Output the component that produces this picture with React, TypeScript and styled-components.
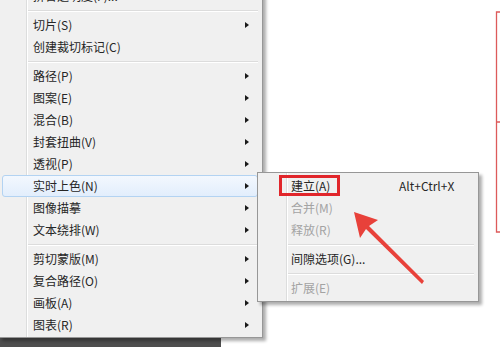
import React from 'react'
import styled, { createGlobalStyle } from 'styled-components'

const GlobalStyle = createGlobalStyle`
  html, body {
    margin: 0;
    padding: 0;
    background: #fff;
  }
  body {
    font-family: 'Noto Sans CJK SC', 'Microsoft YaHei', sans-serif;
  }
`

const Canvas = styled.div`
  position: relative;
  width: 500px;
  height: 347px;
  overflow: hidden;
  background: linear-gradient(#4e4e4e, #4e4e4e) 0 338px / 221px 9px no-repeat,
    #fff;
`

const Menu = styled.div<{ $gutter: number }>`
  box-sizing: border-box;
  border: 1px solid #979797;
  padding: 2px 4px 1px 2px;
  background: linear-gradient(
      to right,
      transparent ${(p) => p.$gutter}px,
      #dcdddd ${(p) => p.$gutter}px,
      #dcdddd ${(p) => p.$gutter + 1}px,
      #fff ${(p) => p.$gutter + 1}px,
      #fff ${(p) => p.$gutter + 2}px,
      transparent ${(p) => p.$gutter + 2}px
    ),
    #f0f0f0;
  box-shadow: 3px 3px 3px rgba(0, 0, 0, 0.32);
  font-size: 12px;
`

const MainMenu = styled(Menu)`
  width: 264px;
  margin: -18px 0 0 -1px;
`

const SubMenu = styled(Menu)`
  position: absolute;
  left: 257px;
  top: 172px;
  width: 222px;
  padding-bottom: 2px;
`

const Item = styled.div<{ $active?: boolean; $disabled?: boolean }>`
  box-sizing: border-box;
  height: 22px;
  display: flex;
  align-items: center;
  justify-content: space-between;
  padding: 0 8px 0 30px;
  color: ${(p) => (p.$disabled ? '#a3a3a3' : '#262626')};
  border: 1px solid ${(p) => (p.$active ? '#b3d3f2' : 'transparent')};
  border-radius: 3px;
  background: ${(p) =>
    p.$active ? 'linear-gradient(#f3f8fe, #e2eefc)' : 'transparent'};
  white-space: nowrap;
  line-height: 20px;
`

const SubItem = styled(Item)`
  display: grid;
  grid-template-columns: 108px 1fr;
`

const Shortcut = styled.span`
  color: #262626;
`

const Arrow = styled.span`
  width: 0;
  height: 0;
  border-left: 4px solid #1a1a1a;
  border-top: 3.5px solid transparent;
  border-bottom: 3.5px solid transparent;
`

const Separator = styled.div<{ $indent: number }>`
  height: 7px;
  display: flex;
  align-items: center;
  padding-left: ${(p) => p.$indent}px;
  &::after {
    content: '';
    flex: 1;
    height: 0;
    border-top: 1px solid #dcdcdc;
    border-bottom: 1px solid #fff;
  }
`

const Mark = styled.div`
  position: absolute;
  left: 21px;
  top: 2px;
  width: 61px;
  height: 21px;
  box-sizing: border-box;
  border: 3px solid #e1262b;
`

const Overlay = styled.svg`
  position: absolute;
  left: 0;
  top: 0;
  pointer-events: none;
`

type Entry =
  | { sep: true }
  | { label: string; sub?: boolean; active?: boolean }

const MAIN: Entry[] = [
  { label: '拼合透明度(F)...' },
  { sep: true },
  { label: '切片(S)', sub: true },
  { label: '创建裁切标记(C)' },
  { sep: true },
  { label: '路径(P)', sub: true },
  { label: '图案(E)', sub: true },
  { label: '混合(B)', sub: true },
  { label: '封套扭曲(V)', sub: true },
  { label: '透视(P)', sub: true },
  { label: '实时上色(N)', sub: true, active: true },
  { label: '图像描摹', sub: true },
  { label: '文本绕排(W)', sub: true },
  { sep: true },
  { label: '剪切蒙版(M)', sub: true },
  { label: '复合路径(O)', sub: true },
  { label: '画板(A)', sub: true },
  { label: '图表(R)', sub: true },
]

type SubEntry = { sep: true } | { label: string; key?: string; off?: boolean }

const LIVE_PAINT: SubEntry[] = [
  { label: '建立(A)', key: 'Alt+Ctrl+X' },
  { label: '合并(M)', off: true },
  { label: '释放(R)', off: true },
  { sep: true },
  { label: '间隙选项(G)...' },
  { sep: true },
  { label: '扩展(E)', off: true },
]

const App = () => (
  <Canvas>
    <GlobalStyle />
    <MainMenu $gutter={26}>
      {MAIN.map((e, i) =>
        'sep' in e ? (
          <Separator key={i} $indent={26} />
        ) : (
          <Item key={i} $active={e.active}>
            <span>{e.label}</span>
            {e.sub && <Arrow />}
          </Item>
        )
      )}
    </MainMenu>

    <SubMenu $gutter={28}>
      {LIVE_PAINT.map((e, i) =>
        'sep' in e ? (
          <Separator key={i} $indent={28} />
        ) : (
          <SubItem key={i} $disabled={e.off}>
            <span>{e.label}</span>
            {e.key && <Shortcut>{e.key}</Shortcut>}
          </SubItem>
        )
      )}
      <Mark />
    </SubMenu>

    <Overlay width="500" height="347" viewBox="0 0 500 347">
      {/* pointer arrow */}
      <polygon
        points="354,212 378,220 369,226 424,281 422,284 366,229 360,238"
        fill="#e8413a"
      />
      {/* bracket on the right */}
      <path
        d="M500 12 H496.5 V232 H500 M496.5 122 H500"
        stroke="#dd5a5a"
        strokeWidth="1.3"
        fill="none"
      />
    </Overlay>
  </Canvas>
)

export default App
